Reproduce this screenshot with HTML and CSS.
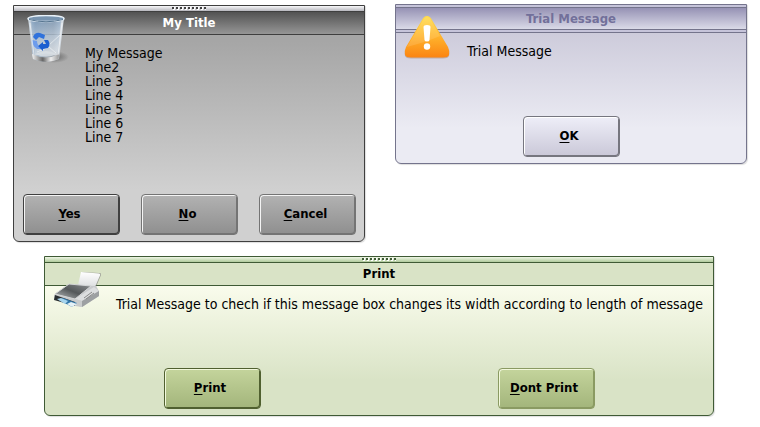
FILE: index.html
```
<!DOCTYPE html>
<html lang="en">
<head>
<meta charset="utf-8">
<title>Message boxes</title>
<link rel="stylesheet" href="styles.css">
</head>
<body>
<main class="page">
  <div class="row">
    <section class="dialog gray" role="dialog" aria-labelledby="t1">
      <div class="grip"></div>
      <h2 class="title" id="t1">My Title</h2>
      <svg class="icon" viewBox="0 0 48 48" aria-hidden="true">
        <defs>
          <linearGradient id="glass" x1="0" x2="1" y1="0" y2="0">
            <stop offset="0" stop-color="#dfe9f2" stop-opacity=".95"/>
            <stop offset=".2" stop-color="#a3bdd6" stop-opacity=".7"/>
            <stop offset=".7" stop-color="#c4d0dc" stop-opacity=".6"/>
            <stop offset="1" stop-color="#e6eef6" stop-opacity=".95"/>
          </linearGradient>
          <linearGradient id="inner" x1="0" x2="0" y1="0" y2="1">
            <stop offset="0" stop-color="#6f94bb" stop-opacity=".5"/>
            <stop offset="1" stop-color="#ffffff" stop-opacity=".4"/>
          </linearGradient>
          <linearGradient id="base" x1="0" x2="1" y1="0" y2="0">
            <stop offset="0" stop-color="#f4f4f4"/>
            <stop offset=".4" stop-color="#666"/>
            <stop offset=".7" stop-color="#eee"/>
            <stop offset="1" stop-color="#999"/>
          </linearGradient>
          <radialGradient id="shade"><stop offset="0" stop-color="#333" stop-opacity=".6"/><stop offset="1" stop-color="#333" stop-opacity="0"/></radialGradient>
        </defs>
        <ellipse cx="32" cy="42" rx="15" ry="6" fill="url(#shade)"/>
        <path d="M6 3 L11 44 Q24 50 37 44 L42 3 Z" fill="url(#glass)"/>
        <path d="M9 5 L13 41 Q24 36 35 41 L39 5 Z" fill="url(#inner)"/>
        <path d="M10 39 Q24 46 37 39 L36.500 44 Q24 50 11 44 Z" fill="url(#base)"/>
        <path d="M13 39 Q24 33 35 39 Q24 44 13 39Z" fill="#d9e0e5" opacity=".8"/>
        <path d="M38 20 L27 30 M15 37 L27 32 L34 38" stroke="#f5f8fa" stroke-width="1" fill="none" opacity=".6"/>
        <path d="M11 22 Q13 17 18 18 L23 20 L22 24 L17 22 L14 25 Z" fill="#2f72dc"/>
        <path d="M10 25 L15 26 Q15 31 20 34 L15 34 Q10 31 10 25 Z" fill="#6d9cec"/>
        <path d="M16 31 L21 27 L21 29 L24 29 L22 25 L26 25 Q29 29 26 33 L21 34 L21 36 Z" fill="#1c5fd0"/>
        <path d="M8 8 L12 40 M40 8 L36 40" stroke="#fff" stroke-width="1" opacity=".6"/>
        <ellipse cx="24" cy="3.500" rx="18" ry="3" fill="#7894b0" stroke="#e9f2fa" stroke-width="1.500"/>
        <path d="M7 4.500 Q24 9 41 4.500" stroke="#55748f" stroke-width="1" fill="none"/>
      </svg>
      <p class="message">My Message<br>Line2<br>Line 3<br>Line 4<br>Line 5<br>Line 6<br>Line 7</p>
      <div class="buttons spread">
        <button class="button default" type="button"><u>Y</u>es</button>
        <button class="button" type="button"><u>N</u>o</button>
        <button class="button" type="button"><u>C</u>ancel</button>
      </div>
    </section>

    <section class="dialog lilac" role="dialog" aria-labelledby="t2">
      <div class="strip"></div>
      <h2 class="title" id="t2">Trial Message</h2>
      <div class="strip"></div>
      <svg class="icon" viewBox="0 0 48 48" aria-hidden="true">
        <defs>
          <linearGradient id="amber" x1="0" x2="0" y1="0" y2="1">
            <stop offset="0" stop-color="#ffdc4a"/>
            <stop offset=".5" stop-color="#ffb32c"/>
            <stop offset="1" stop-color="#fb8412"/>
          </linearGradient>
        </defs>
        <path d="M23 4 Q26 4 28 8 L44 35 Q46 39 45 42 Q44 44.500 39 44.500 L7 44.500 Q2 44.500 1 42 Q0 39 2 35 L18 8 Q20 4 23 4 Z" fill="#9b7252" opacity=".4"/>
        <path d="M23 2 Q26 2 28 6 L44 33 Q46 37 45 41 Q44 43.500 39 43.500 L7 43.500 Q2 43.500 1 41 Q0 37 2 33 L18 6 Q20 2 23 2 Z" fill="url(#amber)"/>
        <path d="M23 3 Q25.500 3 27 6 L36 22 Q22 28 3 33 L19 6 Q21 3 23 3 Z" fill="#fff" opacity=".12"/>
        <path d="M19.500 13 Q19.500 11 23 11 Q26.500 11 26.500 13 L25.500 26 Q25.400 27.500 23 27.500 Q20.600 27.500 20.500 26 Z" fill="#fff"/>
        <circle cx="23" cy="32.500" r="3.200" fill="#fff"/>
      </svg>
      <p class="message">Trial Message</p>
      <div class="buttons">
        <button class="button default" type="button"><u>O</u>K</button>
      </div>
    </section>
  </div>

  <section class="dialog green" role="dialog" aria-labelledby="t3">
    <div class="grip"></div>
    <h2 class="title" id="t3">Print</h2>
    <svg class="icon" viewBox="0 0 48 48" aria-hidden="true">
      <defs>
        <linearGradient id="lid" x1="0" x2="1" y1="1" y2="0">
          <stop offset="0" stop-color="#b9bcbe"/>
          <stop offset=".5" stop-color="#54585a"/>
          <stop offset="1" stop-color="#8c8f91"/>
        </linearGradient>
        <linearGradient id="sheet" x1="0" x2="0" y1="0" y2="1">
          <stop offset="0" stop-color="#fff"/>
          <stop offset="1" stop-color="#dcdedf"/>
        </linearGradient>
      </defs>
      <path d="M29 6 L46 7 Q49 7 48 9 L43 21 L25 21 Z" fill="#777" opacity=".6"/>
      <path d="M28 6 L46 7.500 Q48 8 47 9.500 L42 21 L25 19 Z" fill="url(#sheet)"/>
      <path d="M15 19 L43 20 L46 25 L46 30 L29 41 L22 40 L1 33 L1 29 Z" fill="#c8cacc"/>
      <path d="M2 29 L22 36 L22 40 L1 34 Z" fill="#292d30"/>
      <path d="M16 18 L38 20 L22 33 L2 28 Z" fill="url(#lid)" stroke="#d3d5d6" stroke-width="1"/>
      <path d="M22 33 L41 21 L46 25 L29 35 Z" fill="#dcdedf"/>
      <path d="M29 35 L46 25 L46 30 L29 41 Z" fill="#9da0a2"/>
      <path d="M22 33 L29 35 L29 41 L22 39 Z" fill="#c9cbcc"/>
      <path d="M31 32 L39 26 M33 33 L41 27" stroke="#888" stroke-width="1"/>
      <path d="M6 34 L10 32 L24 37 L19 41 Z" fill="#3478aa"/>
      <path d="M4 33 L8 32 L15 35 L12 38 Z" fill="#a7d5ee"/>
      <path d="M14 38 L18 36 L24 38 L19 41 Z" fill="#e5f1f6"/>
    </svg>
    <p class="message">Trial Message to chech if this message box changes its width according to length of message</p>
    <div class="buttons">
      <button class="button default" type="button"><u>P</u>rint</button>
      <button class="button" type="button"><u>D</u>ont Print</button>
    </div>
  </section>
</main>
</body>
</html>
```
FILE: styles.css
```
* { box-sizing: border-box; }

body {
  margin: 0;
  background: #fff;
  color: #000;
  font: 14px/14px "DejaVu Sans Condensed", "DejaVu Sans", sans-serif;
}

.page {
  display: flex;
  flex-direction: column;
  gap: 14px;
  padding: 4px 13px 10px;
}

.row {
  display: flex;
  align-items: flex-start;
  gap: 30px;
}

.dialog {
  position: relative;
  display: flex;
  flex-direction: column;
  min-height: 160px;
  border: 1px solid var(--line);
  border-radius: 0 0 6px 6px;
  background: linear-gradient(var(--body-top) 15%, var(--body-bottom) 78%);
  box-shadow: 1px 1px 1px #0002;
}

.row .dialog { flex: 1; }

.gray {
  --line: #3f3f3f;
  --body-top: #a6a6a6;
  --body-bottom: #d0d0d0;
  --title-top: #525252;
  --title-bottom: #969696;
  --grip-top: #f8f8fa;
  --grip-bottom: #b6b6bc;
  --title-text: #fff;
  --button-top: #b2b2b2;
  --button-bottom: #8f8f8f;
  --button-line: #747474;
  --button-default: #404040;
  --button-light: #f4f4f4;
  min-height: 237px;
  margin-top: 1px;
}

.lilac {
  --line: #74748c;
  --body-top: #cccada;
  --body-bottom: #ebebf3;
  --title-top: #9692b4;
  --title-bottom: #dadae8;
  --title-text: #72709a;
  --button-top: #eeeef8;
  --button-bottom: #cac8d8;
  --button-line: #76767f;
  --button-default: #76767f;
  --button-light: #fff;
}

.green {
  --line: #3f5a35;
  --body-top: #fbfdee;
  --body-bottom: #d9e3c6;
  --title-top: #d9e3c6;
  --title-bottom: #d9e3c6;
  --grip-top: #eef6e4;
  --grip-bottom: #b0ca9c;
  --title-text: #000;
  --button-top: #c4d49c;
  --button-bottom: #a3b57b;
  --button-line: #8a9a62;
  --button-default: #506030;
  --button-light: #f2f8dc;
  margin: 0 33px 0 31px;
}

.grip {
  display: flex;
  justify-content: center;
  height: 6px;
  padding-top: 1px;
  border-bottom: 1px solid var(--line);
  background: linear-gradient(var(--grip-top), var(--grip-bottom));
}

.grip::before {
  content: "";
  width: 34px;
  height: 3px;
  background:
    repeating-linear-gradient(90deg, var(--line) 0 2px, transparent 2px 4px) 0 0 / 100% 2px no-repeat,
    repeating-linear-gradient(90deg, transparent 0 1px, #fff 1px 3px, transparent 3px 4px);
}

.strip {
  height: 3px;
  border-bottom: 1px solid var(--line);
  background: #c6c4da;
}

.title {
  height: 23px;
  margin: 0;
  border-bottom: 1px solid var(--line);
  background: linear-gradient(var(--title-top), var(--title-bottom));
  color: var(--title-text);
  font: bold 13px/22px "DejaVu Sans Condensed", "DejaVu Sans", sans-serif;
  text-align: center;
}

.lilac .title { height: 22px; }

.icon {
  position: absolute;
  top: 9px;
  left: 8px;
  width: 48px;
  height: 48px;
}

.message {
  margin: 0;
  padding: 11px 4px 11px 71px;
}

.buttons {
  display: flex;
  justify-content: space-around;
  margin-top: auto;
  padding-bottom: 6px;
}

.spread {
  justify-content: space-between;
  padding: 0 8px 6px 9px;
}

.button {
  width: 97px;
  height: 41px;
  padding: 0 4px 2px 0;
  border: 1px solid var(--button-line);
  border-radius: 4px;
  background: linear-gradient(var(--button-top), var(--button-bottom));
  box-shadow: inset 1px 1px var(--button-light), inset -1px -1px var(--button-line);
  color: #000;
  font: bold 13px/16px "DejaVu Sans Condensed", "DejaVu Sans", sans-serif;
}

.default {
  border-color: var(--button-default);
  box-shadow: inset 1px 1px var(--button-light), inset -1px -1px var(--button-default);
}

.button u {
  text-decoration-thickness: 1px;
  text-underline-offset: 2px;
}
```
